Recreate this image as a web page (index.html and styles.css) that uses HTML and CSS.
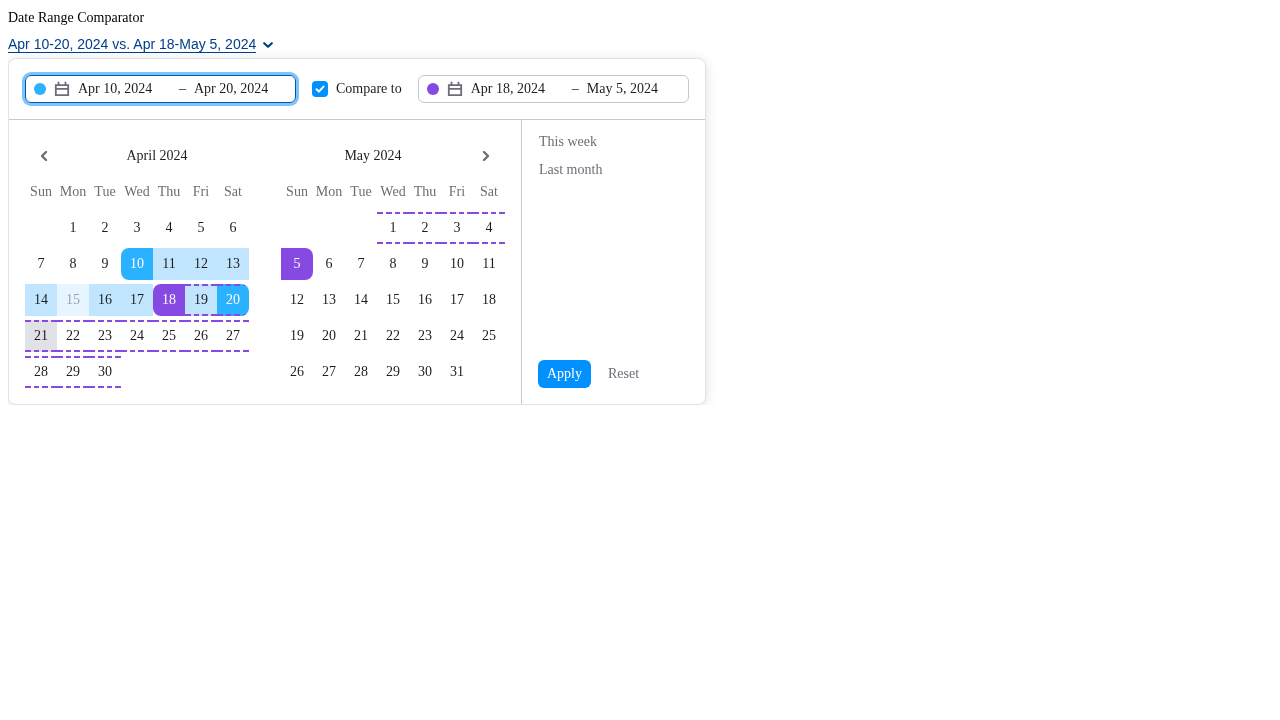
FILE: index.html
```html
<!DOCTYPE html>
<html lang="en">
<head>
<meta charset="UTF-8" />
<meta name="viewport" content="width=device-width, initial-scale=1" />
<title>Date Range Comparator</title>
<link rel="stylesheet" href="styles.css">
</head>
<body>

  <div class="page-label">Date Range Comparator</div>
  <div class="trigger">
    <a class="trigger-link" href="#">Apr 10-20, 2024 vs. Apr 18-May 5, 2024</a>
    <svg class="trigger-chevron" width="16" height="16" viewBox="0 0 16 16"><path d="M4.2 6.2L8 9.8l3.8-3.6" fill="none" stroke="#003e8a" stroke-width="2.2" stroke-linecap="round" stroke-linejoin="round"/></svg>
  </div>

  <div class="popover">
    <div class="toolbar">
      <div class="range-input range-input-focus">
        <span class="dot dot-blue"></span>
        <svg class="cal-icon" width="16" height="16" viewBox="0 0 16 16"><path d="M1.8 4.2h12.4v9.9H1.8zM1.8 7.8h12.4M4.5 .8v3.4M11.5 .8v3.4" fill="none" stroke="#6d6d78" stroke-width="1.8"/></svg>
        <span class="range-from">Apr 10, 2024</span>
        <span class="range-dash">–</span>
        <span>Apr 20, 2024</span>
      </div>
      <label class="compare">
        <span class="checkbox"><svg width="12" height="12" viewBox="0 0 12 12"><path d="M2.5 6.2l2.4 2.4 4.6-5" fill="none" stroke="#fff" stroke-width="2" stroke-linecap="round" stroke-linejoin="round"/></svg></span>
        Compare to
      </label>
      <div class="range-input">
        <span class="dot dot-purple"></span>
        <svg class="cal-icon" width="16" height="16" viewBox="0 0 16 16"><path d="M1.8 4.2h12.4v9.9H1.8zM1.8 7.8h12.4M4.5 .8v3.4M11.5 .8v3.4" fill="none" stroke="#6d6d78" stroke-width="1.8"/></svg>
        <span class="range-from">Apr 18, 2024</span>
        <span class="range-dash">–</span>
        <span>May 5, 2024</span>
      </div>
    </div>

    <div class="panel">
      <div class="calendars">
        <div class="month">
          <div class="month-head">
            <svg class="nav-icon" width="16" height="16" viewBox="0 0 16 16"><path d="M10 4L6 8l4 4" fill="none" stroke="#6d6d78" stroke-width="2.4" stroke-linecap="round" stroke-linejoin="round"/></svg>
            <span class="month-name month-name-left">April 2024</span>
          </div>
          <div class="days" id="april"></div>
        </div>
        <div class="month">
          <div class="month-head">
            <span class="month-name month-name-right">May 2024</span>
            <svg class="nav-icon" width="16" height="16" viewBox="0 0 16 16"><path d="M6 4l4 4-4 4" fill="none" stroke="#6d6d78" stroke-width="2.4" stroke-linecap="round" stroke-linejoin="round"/></svg>
          </div>
          <div class="days" id="may"></div>
        </div>
      </div>
      <div class="sidebar">
        <div class="preset">This week</div>
        <div class="preset">Last month</div>
        <div class="actions">
          <button class="btn-apply">Apply</button>
          <button class="btn-reset">Reset</button>
        </div>
      </div>
    </div>
  </div>

<script>
  const WEEKDAYS = ['Sun', 'Mon', 'Tue', 'Wed', 'Thu', 'Fri', 'Sat'];

  // class names per day of each month
  const APRIL = {
    10: 'sel-blue round-l', 11: 'in-range', 12: 'in-range', 13: 'in-range',
    14: 'in-range', 15: 'in-range-hover', 16: 'in-range', 17: 'in-range',
    18: 'sel-purple round-l', 19: 'in-range dash', 20: 'sel-blue round-r dash',
    21: 'today dash', 22: 'dash', 23: 'dash', 24: 'dash', 25: 'dash', 26: 'dash', 27: 'dash',
    28: 'dash', 29: 'dash', 30: 'dash'
  };
  const MAY = {
    1: 'dash', 2: 'dash', 3: 'dash', 4: 'dash',
    5: 'sel-purple round-r'
  };

  function buildMonth(id, offset, total, marks) {
    const el = document.getElementById(id);
    WEEKDAYS.forEach(name => {
      const d = document.createElement('div');
      d.className = 'weekday';
      d.textContent = name;
      el.appendChild(d);
    });
    for (let i = 0; i < offset; i++) {
      const blank = document.createElement('div');
      blank.className = 'day';
      el.appendChild(blank);
    }
    for (let n = 1; n <= total; n++) {
      const d = document.createElement('div');
      d.className = 'day ' + (marks[n] || '');
      d.textContent = n;
      el.appendChild(d);
    }
  }

  buildMonth('april', 1, 30, APRIL);
  buildMonth('may', 3, 31, MAY);
</script>

</body>
</html>
```

FILE: styles.css
```css
html {
  background: #fff;
}
body {
  margin: 8px;
  font-family: "Liberation Serif", "Times New Roman", serif;
  font-size: 14px;
  color: #1d1d20;
  will-change: transform;
}
.page-label {
  color: #000;
  line-height: 20px;
  margin-bottom: 7px;
}
.trigger {
  display: flex;
  align-items: center;
  gap: 4px;
  height: 19px;
  margin-bottom: 4px;
}
.trigger-link {
  font-family: "Liberation Sans", Arial, sans-serif;
  color: #003e8a;
  text-decoration: none;
  border-bottom: 1px solid #003e8a;
  line-height: 16px;
}
.popover {
  width: 696px;
  border: 1px solid #e1e1e8;
  border-radius: 8px;
  background: #fff;
  box-shadow: 0 2px 12px rgba(0, 0, 0, 0.13);
}
.toolbar {
  display: flex;
  align-items: center;
  gap: 16px;
  height: 60px;
  padding: 0 16px;
  border-bottom: 1px solid #c8c8d0;
}
.range-input {
  display: flex;
  align-items: center;
  box-sizing: border-box;
  width: 271px;
  height: 28px;
  padding: 0 8px;
  border: 1px solid #c8c8d0;
  border-radius: 6px;
}
.range-input-focus {
  border-color: #0054b6;
  box-shadow: 0 0 0 3px #7cc4fa;
}
.dot {
  width: 12px;
  height: 12px;
  border-radius: 50%;
  margin-right: 8px;
}
.dot-blue { background: #2ab1ff; }
.dot-purple { background: #8649e1; }
.cal-icon { margin-right: 8px; }
.range-from { width: 101px; }
.range-dash { width: 15px; }
.compare {
  display: flex;
  align-items: center;
  gap: 8px;
}
.checkbox {
  display: flex;
  align-items: center;
  justify-content: center;
  width: 16px;
  height: 16px;
  border-radius: 4px;
  background: #0091ff;
}
.panel {
  display: flex;
  height: 284px;
}
.calendars {
  display: flex;
  gap: 32px;
  box-sizing: border-box;
  width: 513px;
  padding: 16px;
  border-right: 1px solid #c8c8d0;
}
.month { width: 224px; }
.month-head {
  display: flex;
  align-items: center;
  height: 40px;
  padding: 0 11px;
}
.month-name {
  flex: 1;
  text-align: center;
}
.month-name-left { padding-left: 24px; }
.month-name-right { padding-right: 24px; }
.days {
  display: grid;
  grid-template-columns: repeat(7, 32px);
  grid-auto-rows: 32px;
  row-gap: 4px;
}
.weekday {
  display: flex;
  align-items: center;
  justify-content: center;
  color: #6d6d78;
}
.day {
  display: flex;
  align-items: center;
  justify-content: center;
  box-sizing: border-box;
}
.in-range { background-color: #c2e5ff; }
.in-range-hover { background-color: #e6f5ff; color: #a0a0ac; }
.sel-blue { background-color: #2ab1ff; color: #fff; }
.sel-purple { background-color: #8649e1; color: #fff; }
.today { background-color: #e1e1e8; }
.dash {
  background-image:
    repeating-linear-gradient(90deg, #8649e1 0 5.75px, transparent 5.75px 8.75px),
    repeating-linear-gradient(90deg, #8649e1 0 5.75px, transparent 5.75px 8.75px);
  background-size: 100% 2px;
  background-position: top, bottom;
  background-repeat: no-repeat;
}
.round-l { border-radius: 8px 0 0 8px; }
.round-r { border-radius: 0 8px 8px 0; }
.sidebar {
  display: flex;
  flex-direction: column;
  flex: 1;
  padding: 8px 17px 16px;
  color: #6d6d78;
}
.preset {
  height: 28px;
  line-height: 28px;
}
.actions {
  display: flex;
  align-items: center;
  gap: 8px;
  margin-top: auto;
  margin-left: -1px;
}
.actions button {
  height: 28px;
  padding: 0 9px;
  border: none;
  border-radius: 6px;
  font: inherit;
  background: none;
}
.btn-apply {
  background: #0091ff !important;
  color: #fff;
}
.btn-reset { color: #6d6d78; }
```
